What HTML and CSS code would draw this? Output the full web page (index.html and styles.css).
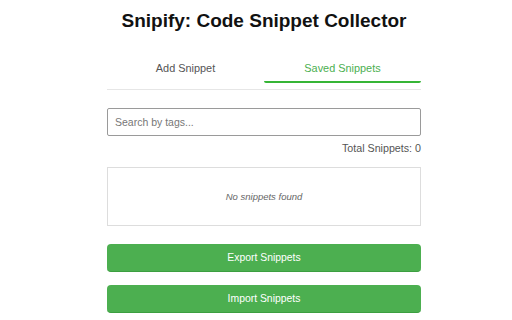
FILE: index.html
```html
<!DOCTYPE html>
<html lang="en">
<head>
<meta charset="utf-8">
<title>Snipify</title>
<link rel="stylesheet" href="styles.css">
</head>
<body>
<div class="app">
  <h1 class="title">Snipify: Code Snippet Collector</h1>
  <div class="tabs">
    <button class="tab">Add Snippet</button>
    <button class="tab active">Saved Snippets</button>
  </div>
  <input class="search" type="text" placeholder="Search by tags...">
  <div class="total">Total Snippets: 0</div>
  <div class="list">
    <p class="empty">No snippets found</p>
  </div>
  <div class="actions">
    <button class="btn">Export Snippets</button>
    <button class="btn">Import Snippets</button>
  </div>
</div>
</body>
</html>
```

FILE: styles.css
```css
html, body {
  background: #ffffff;
}
body {
  margin: 0 0 0 16px;
  font-family: "Liberation Sans", Arial, sans-serif;
  color: #333;
}
.app {
  width: 314px;
  margin: 0 auto;
  display: flex;
  flex-direction: column;
}
.title {
  margin: 10px 0 0;
  font-size: 19px;
  line-height: 22px;
  font-weight: bold;
  color: #111;
  text-align: center;
}
.tabs {
  display: flex;
  margin-top: 22px;
  padding-bottom: 6px;
  border-bottom: 1px solid #e6e6e6;
}
.tab {
  flex: 1;
  margin: 0;
  padding: 8px 0 6px;
  font-family: "Liberation Sans", Arial, sans-serif;
  font-size: 10.9px;
  line-height: 13px;
  color: #555;
  background: transparent;
  border: none;
  border-bottom: 2px solid transparent;
  border-radius: 0 0 2px 2px;
}
.tab.active {
  color: #4caf50;
  border-bottom-color: #36b536;
}
.search {
  box-sizing: border-box;
  margin: 18px 0 0;
  height: 28px;
  padding: 0 7px;
  border: 1px solid #9a9a9a;
  border-radius: 2px;
  font-family: "Liberation Sans", Arial, sans-serif;
  font-size: 10.5px;
  color: #333;
  outline: none;
}
.search::placeholder {
  color: #777;
}
.total {
  margin-top: 6px;
  text-align: right;
  font-size: 10.7px;
  line-height: 13px;
  color: #555;
}
.list {
  box-sizing: border-box;
  margin-top: 12px;
  height: 59px;
  border: 1px solid #dddddd;
  display: flex;
  align-items: center;
  justify-content: center;
}
.empty {
  margin: 0;
  font-style: italic;
  font-size: 9.5px;
  color: #666;
}
.actions {
  margin-top: 18px;
  display: flex;
  flex-direction: column;
  gap: 13px;
}
.btn {
  box-sizing: border-box;
  height: 28px;
  margin: 0;
  padding: 0;
  background: #4caf50;
  color: #ffffff;
  border: none;
  border-bottom: 1px solid #3c9f40;
  border-radius: 4px;
  font-family: "Liberation Sans", Arial, sans-serif;
  font-size: 10.4px;
}
```
